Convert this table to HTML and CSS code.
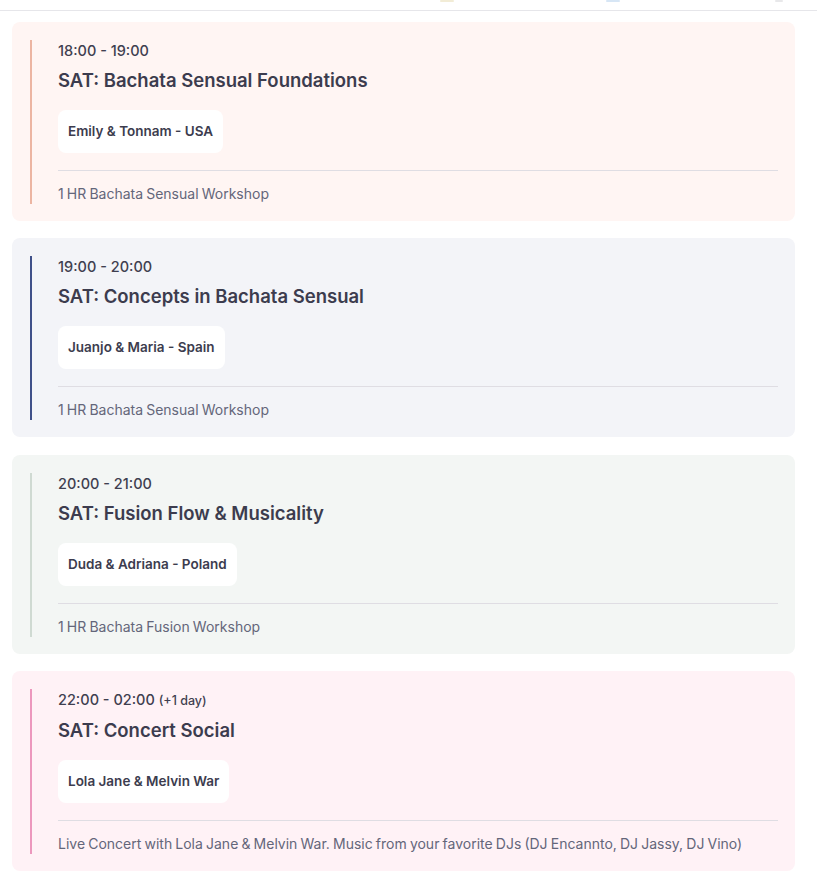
FILE: index.html
```html
<!DOCTYPE html>
<html lang="en">
<head>
<meta charset="utf-8">
<title>Schedule</title>
<link rel="stylesheet" href="styles.css">
</head>
<body>
<header class="topbar">
  <span class="tab-mark tab-yellow"></span>
  <span class="tab-mark tab-blue"></span>
  <span class="tab-mark tab-gray"></span>
</header>
<main class="agenda">
  <article class="slot slot-peach">
    <div class="slot-inner">
      <div class="time">18:00 - 19:00</div>
      <h2 class="title">SAT: Bachata Sensual Foundations</h2>
      <div class="hosts"><span class="chip">Emily &amp; Tonnam - USA</span></div>
      <hr class="divider">
      <p class="desc">1 HR Bachata Sensual Workshop</p>
    </div>
  </article>
  <article class="slot slot-navy">
    <div class="slot-inner">
      <div class="time">19:00 - 20:00</div>
      <h2 class="title">SAT: Concepts in Bachata Sensual</h2>
      <div class="hosts"><span class="chip">Juanjo &amp; Maria - Spain</span></div>
      <hr class="divider">
      <p class="desc">1 HR Bachata Sensual Workshop</p>
    </div>
  </article>
  <article class="slot slot-sage">
    <div class="slot-inner">
      <div class="time">20:00 - 21:00</div>
      <h2 class="title">SAT: Fusion Flow &amp; Musicality</h2>
      <div class="hosts"><span class="chip">Duda &amp; Adriana - Poland</span></div>
      <hr class="divider">
      <p class="desc">1 HR Bachata Fusion Workshop</p>
    </div>
  </article>
  <article class="slot slot-pink">
    <div class="slot-inner">
      <div class="time">22:00 - 02:00 <span class="plus">(+1 day)</span></div>
      <h2 class="title">SAT: Concert Social</h2>
      <div class="hosts"><span class="chip">Lola Jane &amp; Melvin War</span></div>
      <hr class="divider">
      <p class="desc">Live Concert with Lola Jane &amp; Melvin War. Music from your favorite DJs (DJ Encannto, DJ Jassy, DJ Vino)</p>
    </div>
  </article>
</main>
</body>
</html>
```
FILE: styles.css
```css
* { box-sizing: border-box; }
html, body { margin: 0; padding: 0; background: #ffffff; }
body {
  font-family: Inter, "Noto Sans", "Liberation Sans", sans-serif;
  color: #3a3a4c;
  width: 817px;
}
.topbar {
  height: 11px;
  border-bottom: 1px solid #e6e6ea;
  display: flex;
  align-items: flex-start;
}
.tab-mark { height: 2px; border-radius: 1px; display: block; }
.tab-yellow { width: 14px; margin-left: 440px; background: #f2ecd6; }
.tab-blue { width: 14px; margin-left: 152px; background: #d7e6f5; }
.tab-gray { width: 8px; margin-left: 155px; background: #e8e8ea; }

.agenda {
  padding: 11px 22px 8px 12px;
  display: flex;
  flex-direction: column;
  gap: 17.4px;
}
.slot {
  border-radius: 8px;
  padding: 18px 17px 17px 18px;
}
.slot-inner {
  border-left: 2px solid;
  padding-left: 26px;
  padding-top: 1px;
  display: flex;
  flex-direction: column;
}
.slot-peach { background: #fff5f3; }
.slot-peach .slot-inner { border-color: #ecb5a2; }
.slot-navy { background: #f3f4f8; }
.slot-navy .slot-inner { border-color: #3f5089; }
.slot-sage { background: #f3f6f4; }
.slot-sage .slot-inner { border-color: #cfdad2; }
.slot-pink { background: #fff2f6; }
.slot-pink .slot-inner { border-color: #ec98bd; }

.time {
  font-size: 14.5px;
  line-height: 20px;
  font-weight: 500;
  color: #3f3f50;
}
.plus { font-size: 12.5px; }
.title {
  margin: 5px 0 0;
  font-size: 18.5px;
  line-height: 28px;
  font-weight: 600;
  color: #3c3c4e;
}
.hosts { margin-top: 16px; display: flex; }
.chip {
  background: #ffffff;
  border-radius: 8px;
  padding: 12px 10px 13px;
  font-size: 13.5px;
  line-height: 18px;
  font-weight: 600;
  color: #3c3c4e;
}
.divider {
  margin: 17px 0 0;
  border: 0;
  border-top: 1px solid #dfdde3;
}
.desc {
  margin: 13px 0 0;
  font-size: 14px;
  line-height: 20px;
  word-spacing: -0.8px;
  color: #64667a;
}
```
